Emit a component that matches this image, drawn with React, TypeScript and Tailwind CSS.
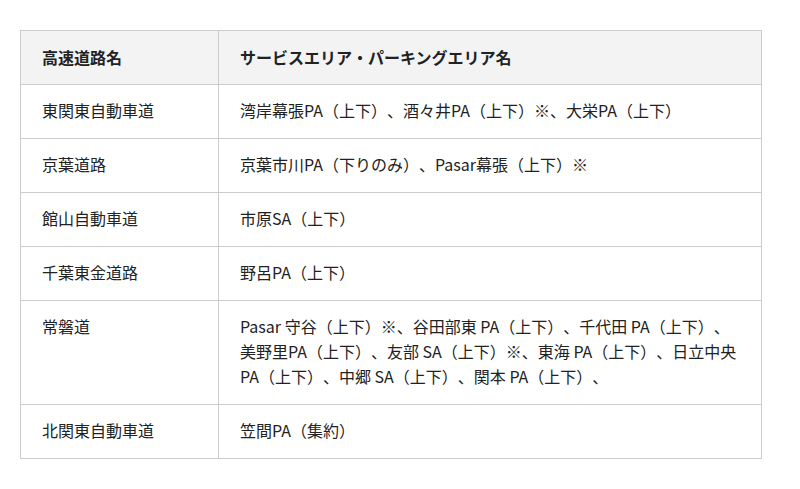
import React from 'react';

// 高速道路ごとのSA・PA一覧
const rows: { road: string; areas: string }[] = [
  { road: '東関東自動車道', areas: '湾岸幕張PA（上下）、酒々井PA（上下）※、大栄PA（上下）' },
  { road: '京葉道路', areas: '京葉市川PA（下りのみ）、Pasar幕張（上下）※' },
  { road: '館山自動車道', areas: '市原SA（上下）' },
  { road: '千葉東金道路', areas: '野呂PA（上下）' },
  {
    road: '常磐道',
    areas:
      'Pasar 守谷（上下）※、谷田部東 PA（上下）、千代田 PA（上下）、美野里PA（上下）、友部 SA（上下）※、東海 PA（上下）、日立中央PA（上下）、中郷 SA（上下）、関本 PA（上下）、',
  },
  { road: '北関東自動車道', areas: '笠間PA（集約）' },
];

const App: React.FC = () => {
  return (
    <div
      className="w-[800px] h-[489px] bg-white pt-[30px] pl-[20px] text-[#222] text-[16px] leading-[25px] [text-spacing-trim:space-all]"
      style={{ fontFamily: '"Noto Sans CJK JP", sans-serif' }}
    >
      <table className="w-[742px] border-collapse table-fixed">
        <thead>
          <tr className="bg-[#f3f3f3]">
            <th className="w-[198px] border border-[#ccc] px-[21px] py-[14px] text-left font-bold align-top">
              高速道路名
            </th>
            <th className="border border-[#ccc] px-[21px] py-[14px] text-left font-bold align-top">
              サービスエリア・パーキングエリア名
            </th>
          </tr>
        </thead>
        <tbody>
          {rows.map((row) => (
            <tr key={row.road}>
              <td className="border border-[#ccc] px-[21px] pt-[13px] pb-[15px] align-top">{row.road}</td>
              <td className="border border-[#ccc] px-[21px] pt-[13px] pb-[15px] align-top">{row.areas}</td>
            </tr>
          ))}
        </tbody>
      </table>
    </div>
  );
};

export default App;
